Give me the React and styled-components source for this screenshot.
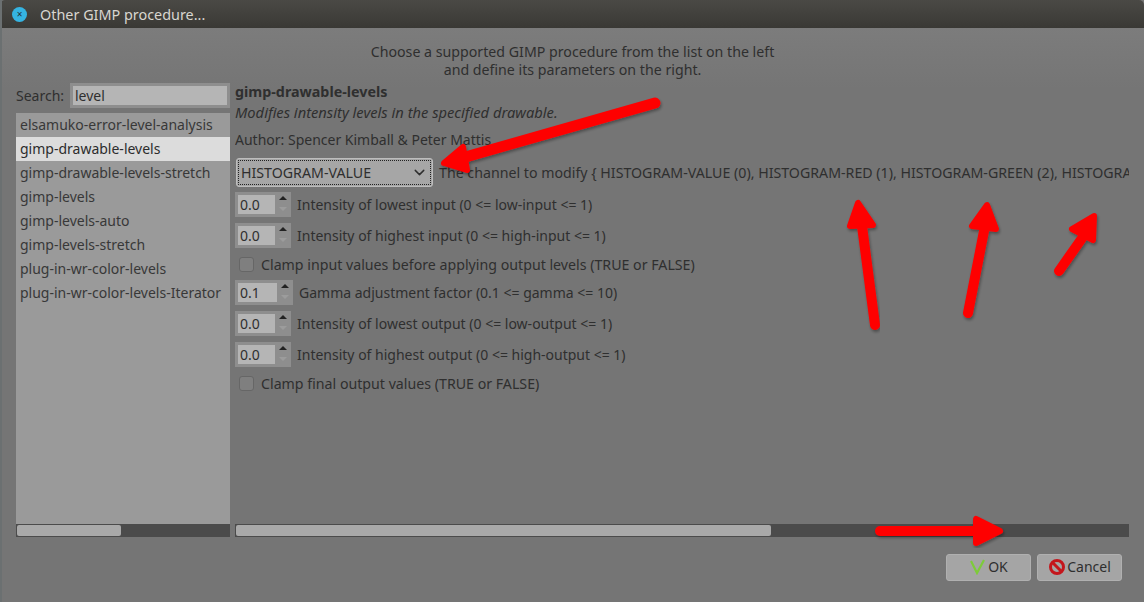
import React from 'react'
import styled, { createGlobalStyle } from 'styled-components'
import { ChevronDown } from 'lucide-react'

const procedures = [
  'elsamuko-error-level-analysis',
  'gimp-drawable-levels',
  'gimp-drawable-levels-stretch',
  'gimp-levels',
  'gimp-levels-auto',
  'gimp-levels-stretch',
  'plug-in-wr-color-levels',
  'plug-in-wr-color-levels-Iterator',
]

const params = [
  { kind: 'spin', value: '0.0', label: 'Intensity of lowest input (0 <= low-input <= 1)' },
  { kind: 'spin', value: '0.0', label: 'Intensity of highest input (0 <= high-input <= 1)' },
  { kind: 'check', label: 'Clamp input values before applying output levels (TRUE or FALSE)' },
  { kind: 'spin', value: '0.1', wide: true, label: 'Gamma adjustment factor (0.1 <= gamma <= 10)' },
  { kind: 'spin', value: '0.0', label: 'Intensity of lowest output (0 <= low-output <= 1)' },
  { kind: 'spin', value: '0.0', label: 'Intensity of highest output (0 <= high-output <= 1)' },
  { kind: 'check', label: 'Clamp final output values (TRUE or FALSE)' },
]

const GlobalStyle = createGlobalStyle`
  html, body {
    margin: 0;
    padding: 0;
    background: #757575;
  }
`

const Window = styled.div`
  position: relative;
  width: 1144px;
  height: 602px;
  overflow: hidden;
  display: flex;
  flex-direction: column;
  background: #757575;
  border-left: 2px solid #6b7071;
  box-sizing: border-box;
  font-family: 'Noto Sans', sans-serif;
  font-size: 14px;
  color: #2f2f2f;
`

const TitleBar = styled.div`
  height: 28px;
  margin-left: -2px;
  flex: none;
  display: flex;
  align-items: center;
  gap: 13px;
  padding-left: 12px;
  background: linear-gradient(#4a4945, #3a3935);
  border-radius: 5px 5px 0 0;
  color: #d8d6d0;
  font-size: 14.4px;
`

const CloseDot = styled.span`
  width: 15px;
  height: 15px;
  border-radius: 50%;
  background: #35b4e2;
  color: #1f2f38;
  display: flex;
  align-items: center;
  justify-content: center;
  font-size: 10px;
  line-height: 1;
`

const Body = styled.div`
  flex: 1;
  min-height: 0;
  display: flex;
  flex-direction: column;
  padding: 15px 15px 0 14px;
  background: linear-gradient(#7c7c7c, #757575 60px);
`

const Intro = styled.div`
  text-align: center;
  line-height: 18px;
  font-size: 14.2px;
  height: 39px;
  flex: none;
`

const Columns = styled.div`
  display: flex;
  gap: 5px;
  height: 455px;
  flex: none;
`

const LeftColumn = styled.div`
  width: 214px;
  flex: none;
  display: flex;
  flex-direction: column;
`

const SearchRow = styled.div`
  height: 26px;
  flex: none;
  display: flex;
  align-items: center;
  justify-content: space-between;
  margin-bottom: 5px;
`

const SearchInput = styled.div`
  width: 160px;
  height: 25px;
  box-sizing: border-box;
  background: #b5b5b5;
  border: 3px solid #8e8e8e;
  padding-left: 2px;
  line-height: 19px;
`

const ProcedureList = styled.div`
  flex: 1;
  background: #9a9a9a;
`

const ProcedureItem = styled.div`
  height: 24px;
  line-height: 24px;
  padding-left: 4px;
  white-space: nowrap;
  background: ${(p) => (p.$selected ? '#dcdcdc' : 'transparent')};
  color: ${(p) => (p.$selected ? '#2c2c2c' : '#383838')};
`

const ScrollTrack = styled.div`
  height: 13px;
  flex: none;
  background: #4b4b4b;
  box-sizing: border-box;
  padding: 1px;
`

const ScrollThumb = styled.div`
  height: 100%;
  background: #a9a9a9;
  border-radius: 2px;
`

const RightColumn = styled.div`
  flex: 1;
  min-width: 0;
  display: flex;
  flex-direction: column;
`

const Details = styled.div`
  flex: 1;
  min-height: 0;
  overflow: hidden;
  white-space: nowrap;
`

const ProcName = styled.div`
  height: 20px;
  line-height: 19px;
  font-weight: 700;
  font-size: 14.3px;
`

const ProcDesc = styled.div`
  height: 28px;
  line-height: 20px;
  font-style: italic;
  font-size: 14.7px;
`

const Author = styled.div`
  height: 27px;
  line-height: 20px;
`

const ChannelRow = styled.div`
  height: 30px;
  display: flex;
  align-items: center;
  gap: 6px;
  padding-left: 1px;
  margin-bottom: 2px;
  font-size: 14.2px;
`

const ComboBox = styled.div`
  width: 197px;
  height: 29px;
  flex: none;
  box-sizing: border-box;
  display: flex;
  align-items: center;
  justify-content: space-between;
  padding: 0 4px;
  border-radius: 3px;
  background: #a6a6a6;
  border: 1px solid #bdbdbd;
  outline: 1px dotted #222;
  outline-offset: -3px;
`

const ParamRow = styled.div`
  height: ${(p) => (p.$check ? 26 : 31)}px;
  display: flex;
  align-items: center;
  gap: 6px;
  padding-left: ${(p) => (p.$check ? 4 : 0)}px;
  font-size: ${(p) => (p.$check ? 14.2 : 14)}px;
`

const SpinBox = styled.div`
  width: ${(p) => (p.$wide ? 58 : 56)}px;
  height: 25px;
  flex: none;
  display: flex;
  box-sizing: border-box;
  background: #8e8e8e;
  padding: 3px 0 3px 3px;
`

const SpinValue = styled.div`
  flex: 1;
  background: #b5b5b5;
  line-height: 19px;
  padding-left: 2px;
`

const SpinArrows = styled.div`
  width: 16px;
  flex: none;
  display: flex;
  flex-direction: column;
  align-items: center;
  justify-content: space-between;
  padding: 1px 0 3px;
`

const SpinTriangle = styled.span`
  width: 0;
  height: 0;
  border-left: 4px solid transparent;
  border-right: 4px solid transparent;
  border-bottom: ${(p) => (p.$down ? '0' : '4px solid #222')};
  border-top: ${(p) => (p.$down ? '4px solid #9c9c9c' : '0')};
`

const CheckMark = styled.span`
  width: 13px;
  height: 13px;
  flex: none;
  border-radius: 3px;
  border: 1px solid #666;
  background: #7f7f7f;
  margin-right: 1px;
`

const Footer = styled.div`
  flex: 1;
  display: flex;
  justify-content: flex-end;
  gap: 6px;
  padding: 17px 7px 0 0;
`

const DialogButton = styled.div`
  width: 85px;
  height: 27px;
  box-sizing: border-box;
  display: flex;
  align-items: center;
  justify-content: center;
  gap: 1px;
  border-radius: 3px;
  background: #a5a5a5;
  border: 1px solid #b0b0b0;
  font-size: 14px;
  padding-bottom: 2px;
`

const ArrowLayer = styled.svg`
  position: absolute;
  left: -2px;
  top: 0;
  pointer-events: none;
`

const arrows = [
  { line: 'M655 103L462 158', head: '444 163 463 147 467 170', width: 11 },
  { line: 'M875 325L862 226', head: '858 203 850 226 873 225', width: 10 },
  { line: 'M968 313L985 226', head: '987 205 972 226 996 229', width: 10 },
  { line: 'M1059 271L1085 234', head: '1094 216 1072 229 1093 240', width: 10 },
  { line: 'M880 531L980 531', head: '1000 531 976 519 976 543', width: 10 },
]

export default function App() {
  return (
    <Window>
      <GlobalStyle />
      <TitleBar>
        <CloseDot>×</CloseDot>
        Other GIMP procedure...
      </TitleBar>
      <Body>
        <Intro>
          Choose a supported GIMP procedure from the list on the left
          <br />
          and define its parameters on the right.
        </Intro>
        <Columns>
          <LeftColumn>
            <SearchRow>
              Search:
              <SearchInput>level</SearchInput>
            </SearchRow>
            <ProcedureList>
              {procedures.map((name, index) => (
                <ProcedureItem key={name} $selected={index === 1}>{name}</ProcedureItem>
              ))}
            </ProcedureList>
            <ScrollTrack>
              <ScrollThumb style={{ width: '49%' }} />
            </ScrollTrack>
          </LeftColumn>
          <RightColumn>
            <Details>
              <ProcName>gimp-drawable-levels</ProcName>
              <ProcDesc>Modifies intensity levels in the specified drawable.</ProcDesc>
              <Author>Author: Spencer Kimball &amp; Peter Mattis</Author>
              <ChannelRow>
                <ComboBox>
                  HISTOGRAM-VALUE
                  <ChevronDown size={17} strokeWidth={2} />
                </ComboBox>
                The channel to modify {'{'} HISTOGRAM-VALUE (0), HISTOGRAM-RED (1), HISTOGRAM-GREEN (2), HISTOGRAM-BLUE (3), HISTOGRAM-ALPHA (4) {'}'}
              </ChannelRow>
              {params.map((param) => (
                param.kind === 'spin' ? (
                  <ParamRow key={param.label}>
                    <SpinBox $wide={param.wide}>
                      <SpinValue>{param.value}</SpinValue>
                      <SpinArrows>
                        <SpinTriangle />
                        <SpinTriangle $down />
                      </SpinArrows>
                    </SpinBox>
                    {param.label}
                  </ParamRow>
                ) : (
                  <ParamRow key={param.label} $check>
                    <CheckMark />
                    {param.label}
                  </ParamRow>
                )
              ))}
            </Details>
            <ScrollTrack>
              <ScrollThumb style={{ width: '60%' }} />
            </ScrollTrack>
          </RightColumn>
        </Columns>
        <Footer>
          <DialogButton>
            <svg width="18" height="16" viewBox="0 0 18 16">
              <path d="M2 2L8 14L15 1" fill="none" stroke="#7ecb3a" strokeWidth="2.2" />
            </svg>
            OK
          </DialogButton>
          <DialogButton>
            <svg width="18" height="18" viewBox="0 0 18 18">
              <circle cx="9" cy="9" r="6.5" fill="none" stroke="#c4161c" strokeWidth="3" />
              <path d="M4.5 4.5L13.5 13.5" stroke="#c4161c" strokeWidth="3" />
            </svg>
            Cancel
          </DialogButton>
        </Footer>
      </Body>
      <ArrowLayer width="1144" height="602" viewBox="0 0 1144 602">
        <defs>
          <filter id="arrow-shadow" x="-20%" y="-20%" width="140%" height="140%">
            <feDropShadow dx="1" dy="2" stdDeviation="1.5" floodColor="#000" floodOpacity="0.35" />
          </filter>
        </defs>
        {arrows.map((arrow) => (
          <g key={arrow.line} filter="url(#arrow-shadow)" fill="#fe0000" stroke="#fe0000" strokeLinecap="round" strokeLinejoin="round">
            <path d={arrow.line} strokeWidth={arrow.width} fill="none" />
            <polygon points={arrow.head} strokeWidth="6" />
          </g>
        ))}
      </ArrowLayer>
    </Window>
  )
}
